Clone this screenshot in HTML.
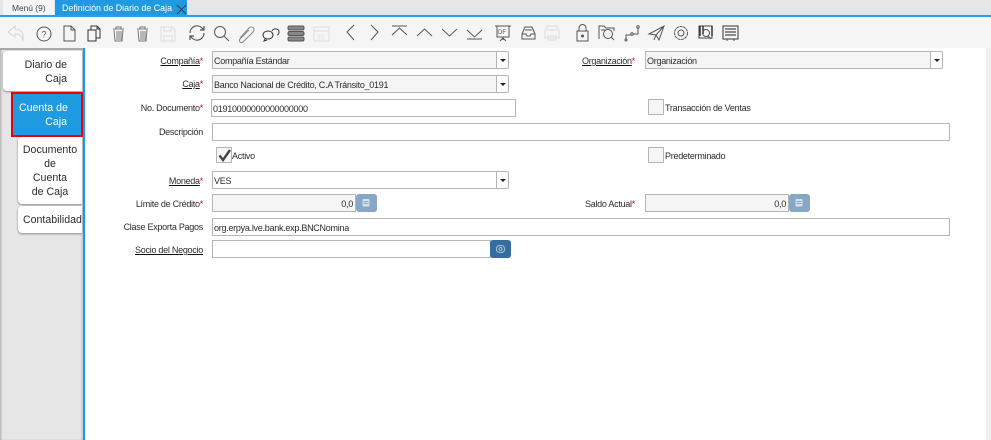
<!DOCTYPE html>
<html><head><meta charset="utf-8"><style>
html,body{margin:0;padding:0;width:991px;height:440px;overflow:hidden;background:#fff}
body{position:relative;font-family:"Liberation Sans","Noto Sans CJK SC",sans-serif;font-size:9px;letter-spacing:-.27px;color:#2b2b2b}
div{position:absolute;box-sizing:border-box}
.t{white-space:nowrap;line-height:14px;height:14px}
.l{right:788px;text-align:right}
.l2{text-align:right}
.u{text-decoration:underline;text-decoration-color:#111}
.s{color:#e00}
.i{background:#fff;border:1px solid #b5b5b5;height:18px;padding-left:1px;line-height:18px;white-space:nowrap}
.r{background:#f5f5f5}
.dd{width:13px;height:18px;background:#fff;border:1px solid #b5b5b5;border-radius:0 2px 2px 0}
.dd:after{content:"";position:absolute;left:3px;top:7px;border:3px solid transparent;border-top:3px solid #222;border-bottom:0}
.c{width:16px;height:16px;border:1px solid #b5b5b5;background:#f5f5f5}
.tab{background:#fff;text-align:right;font-size:10.6px;letter-spacing:0;line-height:14px;box-shadow:0 1px 2px #888;border-radius:4px 0 0 4px;white-space:nowrap}
.b{width:21px;height:18px;border-radius:3px}
</style></head><body>
<div style="left:0;top:0;width:991px;height:15px;background:#e6e6e6"></div>
<div style="left:3px;top:0;width:51px;height:15px;background:#f5f5f5"></div>
<div class="t" style="left:12px;top:1px;color:#444;font-size:8.4px;letter-spacing:0">Menú (9)</div>
<div style="left:55px;top:0;width:132px;height:15px;background:#1f9ae0"></div>
<div class="t" style="left:62px;top:1px;color:#fff;font-size:8.9px;letter-spacing:0">Definición de Diario de Caja</div>
<div style="left:0;top:15px;width:991px;height:2px;background:#25a0e6"></div>
<div style="left:0;top:17px;width:991px;height:31px;background:#f5f5f5"></div>
<svg style="position:absolute;left:0;top:0" width="991" height="48" fill="none" stroke="#555" stroke-width="1">
<path d="M177 5l9 9M186 5l-9 9" stroke="#345"/>
<path d="M8 32l7-6v3c6 0 9 4 8 11-2-5-4-6-8-6v3z" stroke="#d5d5d5"/>
<circle cx="44" cy="34" r="7"/><text x="41.500" y="37.500" font-size="9" fill="#555" stroke="none" font-family="Liberation Sans" letter-spacing="0">?</text>
<path d="M64 26h7l4 4v11H64zM71 26v4h4"/>
<path d="M88 30h8v11h-8zM91 30v-4h6l3 3v9h-4M97 26v3h3" stroke="#333"/>
<path d="M113 29h11M116 29v-2h5v2M114 30l1 11h7l1-11M117 31v9M119 31v9M121 31v9" stroke="#777"/>
<path d="M137 29h11M140 29v-2h5v2M138 30l1 11h7l1-11M141 31v9M143 31v9M145 31v9" stroke="#777"/>
<path d="M161 27h11l3 3v11h-14zM164 27v4h7v-4M164 41v-5h8v5" stroke="#ddd"/>
<path d="M190 33a7 7 0 0 1 12-5l2 2M204 26v4h-4M204 33a7 7 0 0 1-12 5l-2-2M190 40v-4h4" stroke-width="1.200"/>
<circle cx="220" cy="32" r="5.500"/><path d="M224 36l5 5" />
<path d="M240 38l9-10c3-3 7 1 4 4l-10 10c-2 2-5-1-3-3l9-9" stroke="#888"/>
<ellipse cx="268" cy="35" rx="5" ry="4" stroke="#333"/><path d="M265 39l-1 2 3-1M272 31c1-3 7-3 7 1 0 2-1 3-2 3" stroke="#333"/>
<rect x="288" y="26" width="16" height="4" rx="1.500" fill="#888"/><rect x="288" y="31.500" width="16" height="4" rx="1.500" fill="#888"/><rect x="288" y="37" width="16" height="4" rx="1.500" fill="#888"/>
<path d="M314 27h15v14h-15zM314 31h15" stroke="#ddd"/><text x="317" y="39.500" font-size="7" fill="#ddd" stroke="none" font-family="Liberation Sans" letter-spacing="0">31</text>
<path d="M354 25l-7 7 7 8M371 25l7 7-7 8"/>
<path d="M392 26h15M392 35l7.500-7 7.500 7M417 36l7.500-7 7.500 7M442 29l7.500 7 7.500-7M467 30l7.500 7 7.500-7M467 39h15"/>
<path d="M497 26h12v11h-12zM495 26h16M503 37v3M500 41l3-3 3 3"/><text x="498" y="34" font-size="6" fill="#555" stroke="none" font-family="Liberation Sans" letter-spacing="0">DF</text>
<path d="M522 34l3-7h7l3 7v5h-13zM522 34h4l1 2h3l1-2h4M525 30h7"/>
<path d="M547 29v-3h10v3M545 30h14v8h-14zM548 36h8v4h-8z" stroke="#ddd"/>
<path d="M577 31h11v10h-11zM579 31v-3a3.500 3.500 0 0 1 7 0v3"/><circle cx="582.500" cy="36" r="1" fill="#555"/>
<path d="M599 39V26h5l2 2h8v3M601 30h5"/><circle cx="608" cy="34" r="4.500"/><path d="M611 37l3 3"/>
<circle cx="626" cy="40" r="1"/><circle cx="632" cy="34" r="1.200"/><circle cx="638" cy="27" r="1.200"/><path d="M626 39v-4h5M633 34h5v-6"/>
<path d="M649 34l15-8-5 14-3-5zM664 26l-8 9-2 5"/>
<circle cx="681" cy="33" r="3"/><circle cx="681" cy="33" r="6.500" stroke-dasharray="3 .6"/>
<path d="M699 26h13v12h-13z" stroke="#444"/><path d="M700 26v10M703 26v8M712 26v10" stroke="#333" stroke-width="1.500"/><circle cx="706" cy="33" r="3.500"/><path d="M708 36l3 3"/>
<path d="M723 26h15v13h-15z" stroke="#333"/><path d="M725 29h11M725 32h11M725 35h11" stroke="#666" stroke-width="1.500"/><path d="M727 39v2M734 39v2"/>
</svg>

<div style="left:0;top:48px;width:83px;height:392px;background:#e6e6e6;box-shadow:inset 2px 0 2px -1px #aaa,inset -2px 0 2px -1px #bbb"></div>
<div style="left:0;top:48px;width:85px;height:2px;background:#aaa"></div>
<div style="left:83px;top:48px;width:2px;height:392px;background:#0f9fe3"></div>
<div style="left:986px;top:48px;width:5px;height:392px;background:#f0f0f0"></div>

<div class="tab" style="left:3px;top:51px;width:79px;height:40px;padding:7px 15px 0 0">Diario de<br>Caja</div>
<div class="tab" style="left:18px;top:137px;width:64px;height:67px;padding:6px 0 0 0;text-align:center">Documento<br>de<br>Cuenta<br>de Caja</div>
<div class="tab" style="left:18px;top:206px;width:64px;height:27px;padding:7px 0 0 5px;text-align:left">Contabilidad</div>
<div style="left:11px;top:92px;width:72px;height:45px;background:#1e9ae0;border:2px solid #e8000b;color:#fff;font-size:10.6px;letter-spacing:0;line-height:14px;text-align:right;padding:7px 14px 0 6px;white-space:nowrap">Cuenta de<br>Caja</div>

<div class="t l" style="top:54px"><span class="u">Compañía</span><span class="s">*</span></div>
<div class="t l" style="top:77px"><span class="u">Caja</span><span class="s">*</span></div>
<div class="t l" style="top:101px">No. Documento<span class="s">*</span></div>
<div class="t l" style="top:125px">Descripción</div>
<div class="t l" style="top:174px"><span class="u">Moneda</span><span class="s">*</span></div>
<div class="t l" style="top:197px">Límite de Crédito<span class="s">*</span></div>
<div class="t l" style="top:220px">Clase Exporta Pagos</div>
<div class="t l" style="top:243px"><span class="u">Socio del Negocio</span></div>

<div class="i r" style="left:212px;top:51px;width:285px">Compañía Estándar</div><div class="dd" style="left:496px;top:51px"></div>
<div class="i r" style="left:212px;top:75px;width:285px">Banco Nacional de Crédito, C.A Tránsito_0191</div><div class="dd" style="left:496px;top:75px"></div>
<div class="i" style="left:211px;top:99px;width:305px">01910000000000000000</div>
<div class="i" style="left:212px;top:123px;width:738px"></div>
<div class="c" style="left:216px;top:147px"></div>
<svg style="position:absolute;left:216px;top:146px" width="18" height="18" fill="none"><path d="M3.500 9.500l3.500 4.500 7-10" stroke="#444" stroke-width="2.400"/></svg>
<div class="t" style="left:232px;top:149px">Activo</div>
<div class="i" style="left:212px;top:171px;width:285px">VES</div><div class="dd" style="left:496px;top:171px"></div>
<div class="i r" style="left:212px;top:194px;width:144px;text-align:right;padding-right:2px">0,0</div>
<div class="b" style="left:356px;top:194px;background:#86a7c6"></div>
<svg style="position:absolute;left:361px;top:198px" width="10" height="10"><rect x="1.500" y="1" width="7" height="7.500" rx="1" fill="#d5e0ea"/><path d="M2.500 3.500h5M2.500 5.500h5" stroke="#86a7c6"/></svg>
<div class="i" style="left:212px;top:218px;width:738px">org.erpya.lve.bank.exp.BNCNomina</div>
<div class="i" style="left:212px;top:240px;width:279px"></div>
<div class="b" style="left:490px;top:240px;background:#356d9e"></div>
<svg style="position:absolute;left:495px;top:244px" width="11" height="10" fill="none" stroke="#a9c2d8"><rect x="1.500" y="1.500" width="8" height="7" rx="3"/><circle cx="5.500" cy="5" r="1.500"/></svg>

<div class="t l2" style="right:356px;top:54px"><span class="u">Organización</span><span class="s">*</span></div>
<div class="i r" style="left:645px;top:51px;width:286px">Organización</div><div class="dd" style="left:930px;top:51px"></div>
<div class="c" style="left:648px;top:99px"></div>
<div class="t" style="left:665px;top:101px">Transacción de Ventas</div>
<div class="c" style="left:648px;top:147px"></div>
<div class="t" style="left:665px;top:149px">Predeterminado</div>
<div class="t l2" style="right:356px;top:197px">Saldo Actual<span class="s">*</span></div>
<div class="i r" style="left:645px;top:194px;width:144px;text-align:right;padding-right:2px">0,0</div>
<div class="b" style="left:789px;top:194px;background:#86a7c6"></div>
<svg style="position:absolute;left:794px;top:198px" width="10" height="10"><rect x="1.500" y="1" width="7" height="7.500" rx="1" fill="#d5e0ea"/><path d="M2.500 3.500h5M2.500 5.500h5" stroke="#86a7c6"/></svg>
</body></html>
